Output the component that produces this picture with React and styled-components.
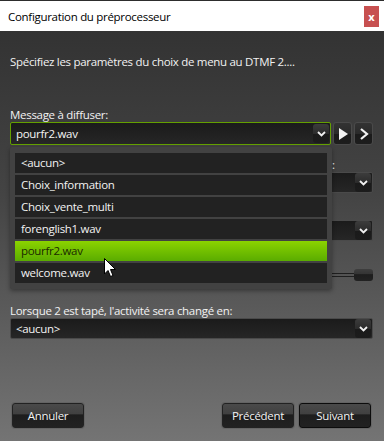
import React from "react";
import styled, { createGlobalStyle } from "styled-components";

const GlobalStyle = createGlobalStyle`
  html, body { margin: 0; padding: 0; background: #2b2b2b; }
  body { font-family: "Open Sans", "Noto Sans", sans-serif; font-size: 11.5px; }
  * { box-sizing: border-box; }
`;

const items = [
  "<aucun>",
  "Choix_information",
  "Choix_vente_multi",
  "forenglish1.wav",
  "pourfr2.wav",
  "welcome.wav",
];

export default function App() {
  return (
    <>
      <GlobalStyle />
      <Window>
        <TitleBar>
          <Title>Configuration du préprocesseur</Title>
          <CloseButton>x</CloseButton>
        </TitleBar>
        <Body>
          <Intro>Spécifiez les paramètres du choix de menu au DTMF 2....</Intro>

          <Field $top={37}>
            <Label>Message à diffuser:</Label>
            <Row>
              <Select $active>
                <SelectText>pourfr2.wav</SelectText>
                <ArrowButton><Chevron /></ArrowButton>
              </Select>
              <IconButton>
                <svg width="10" height="12" viewBox="0 0 10 12">
                  <path d="M1 0 L10 6 L1 12 Z" fill="#f2f2f2" />
                </svg>
              </IconButton>
              <IconButton>
                <svg width="10" height="12" viewBox="0 0 10 12">
                  <path d="M2 1 L8 6 L2 11" fill="none" stroke="#f2f2f2" strokeWidth="2.2" />
                </svg>
              </IconButton>
            </Row>
          </Field>

          {/* fields hidden under the open list: only their right ends show */}
          <Field $top={12}>
            <Label $hiddenStart={322}>:</Label>
            <Select>
              <SelectText />
              <ArrowButton><Chevron /></ArrowButton>
            </Select>
          </Field>

          <Field $top={12}>
            <Label />
            <Select>
              <SelectText />
              <ArrowButton><Chevron /></ArrowButton>
            </Select>
          </Field>

          <Field $top={12}>
            <Label />
            <SliderRow>
              <Track />
              <Thumb />
            </SliderRow>
          </Field>

          <Field $top={21}>
            <Label>Lorsque 2 est tapé, l'activité sera changé en:</Label>
            <Select>
              <SelectText>&lt;aucun&gt;</SelectText>
              <ArrowButton><Chevron /></ArrowButton>
            </Select>
          </Field>

          <Footer>
            <Button>Annuler</Button>
            <Spacer />
            <Button>Précédent</Button>
            <Button $default>Suivant</Button>
          </Footer>

          <Popup>
            {items.map((item) => (
              <Option key={item} $selected={item === "pourfr2.wav"}>
                {item}
              </Option>
            ))}
          </Popup>

          <Cursor width="13" height="20" viewBox="0 0 13 20">
            <path
              d="M0.5 0.5 L0.5 16 L4 12.5 L6.5 18.5 L9 17.5 L6.5 11.5 L11.5 11.5 Z"
              fill="#fff"
              stroke="#000"
              strokeWidth="1"
            />
          </Cursor>
        </Body>
      </Window>
    </>
  );
}

function Chevron() {
  return (
    <svg width="9" height="6" viewBox="0 0 9 6">
      <path d="M1 1 L4.5 4.5 L8 1" fill="none" stroke="#f0f0f0" strokeWidth="1.8" />
    </svg>
  );
}

const Window = styled.div`
  width: 384px;
  height: 441px;
  display: flex;
  flex-direction: column;
  border-top: 1px solid #2d2d2d;
  overflow: hidden;
`;

const TitleBar = styled.div`
  height: 30px;
  background: #ffffff;
  display: flex;
  align-items: center;
  justify-content: space-between;
  padding: 0 5px 0 8px;
`;

const Title = styled.div`
  color: #000;
  font-size: 11.5px;
  letter-spacing: -0.3px;
`;

const CloseButton = styled.div`
  width: 15px;
  height: 21px;
  background: #c75050;
  color: #fff;
  font-weight: bold;
  font-size: 11px;
  display: flex;
  align-items: center;
  justify-content: center;
`;

const Body = styled.div`
  position: relative;
  flex: 1;
  display: flex;
  flex-direction: column;
  padding: 0 11px 13px 10px;
  background: linear-gradient(180deg, #333333 0%, #444444 40%, #747474 100%);
  color: #f2f2f2;
`;

const Intro = styled.div`
  margin-top: 23px;
  line-height: 16px;
  letter-spacing: -0.3px;
`;

const Field = styled.div`
  margin-top: ${(p) => p.$top}px;
  display: flex;
  flex-direction: column;
`;

const Label = styled.div`
  line-height: 15px;
  height: 15px;
  letter-spacing: -0.3px;
  padding-left: ${(p) => p.$hiddenStart || 0}px;
`;

const Row = styled.div`
  display: flex;
  gap: 2px;
`;

const Select = styled.div`
  flex: 1;
  height: 23px;
  display: flex;
  align-items: center;
  justify-content: space-between;
  padding: 0 1px 0 5px;
  border: 1px solid ${(p) => (p.$active ? "#64a000" : "#4a4a4a")};
  border-radius: 2px;
  background: linear-gradient(180deg, #1b1b1b 0%, #262626 100%);
`;

const SelectText = styled.span`
  color: #f4f4f4;
  letter-spacing: -0.3px;
`;

const ArrowButton = styled.div`
  width: 16px;
  height: 19px;
  border-radius: 3px;
  background: linear-gradient(180deg, #3c3c3c 0%, #2c2c2c 50%, #1a1a1a 51%, #1c1c1c 100%);
  display: flex;
  align-items: center;
  justify-content: center;
`;

const IconButton = styled.div`
  width: 19px;
  height: 23px;
  border: 1px solid #4a4a4a;
  border-radius: 3px;
  background: linear-gradient(180deg, #333 0%, #2a2a2a 50%, #1a1a1a 51%, #1d1d1d 100%);
  display: flex;
  align-items: center;
  justify-content: center;
`;

const SliderRow = styled.div`
  height: 14px;
  display: flex;
  align-items: center;
  justify-content: flex-end;
`;

const Track = styled.div`
  flex: 1;
  height: 4px;
  border-top: 1px solid #1f1f1f;
  border-bottom: 1px solid #1f1f1f;
`;

const Thumb = styled.div`
  width: 19px;
  height: 12px;
  border-radius: 3px;
  background: linear-gradient(180deg, #3e3e3e 0%, #333 45%, #1d1d1d 46%, #222 100%);
`;

const Footer = styled.div`
  margin-top: auto;
  display: flex;
  gap: 5px;
  padding: 0 2px;
`;

const Spacer = styled.div`
  flex: 1;
`;

const Button = styled.div`
  width: 72px;
  height: 25px;
  border: 1px solid ${(p) => (p.$default ? "#0c0c0c" : "#222")};
  border-radius: 3px;
  background: linear-gradient(180deg, #4a4a4a 0%, #404040 45%, #1d1d1d 46%, #222 100%);
  color: #f2f2f2;
  display: flex;
  align-items: center;
  justify-content: center;
  letter-spacing: -0.3px;
  box-shadow: 0 0 0 1px rgba(90, 90, 90, 0.5);
`;

const Popup = styled.div`
  position: absolute;
  top: 116px;
  left: 10px;
  width: 322px;
  height: 142px;
  padding: 6px 5px;
  display: flex;
  flex-direction: column;
  gap: 2px;
  background: #424242;
  border-radius: 2px;
  box-shadow: 0 2px 4px rgba(0, 0, 0, 0.35);
`;

const Option = styled.div`
  height: 20px;
  line-height: 20px;
  padding-left: 6px;
  color: ${(p) => (p.$selected ? "#1a2a00" : "#f2f2f2")};
  background: ${(p) =>
    p.$selected ? "linear-gradient(180deg, #8bd300 0%, #5aac00 100%)" : "#222222"};
  letter-spacing: -0.3px;
`;

const Cursor = styled.svg`
  position: absolute;
  left: 104px;
  top: 227px;
`;
